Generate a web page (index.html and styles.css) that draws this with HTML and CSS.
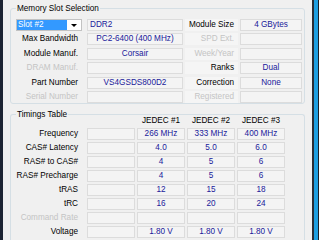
FILE: index.html
```html
<!DOCTYPE html>
<html lang="en">
<head>
  <meta charset="UTF-8">
  <title>SPD</title>
  <link rel="stylesheet" href="styles.css">
</head>
<body>

  <div class="window">
    <div class="edge-left"></div>

    <div class="tab">

      <div class="group slots">
        <div class="group-title">Memory Slot Selection</div>
        <div class="slot-grid">
          <div class="slot-select"><span class="slot-current">Slot #2</span><span class="slot-arrow"></span></div>
          <div class="field left">DDR2</div>
          <div class="label right">Module Size</div>
          <div class="field">4 GBytes</div>

          <div class="label">Max Bandwidth</div>
          <div class="field">PC2-6400 (400 MHz)</div>
          <div class="label right off">SPD Ext.</div>
          <div class="field"></div>

          <div class="label">Module Manuf.</div>
          <div class="field">Corsair</div>
          <div class="label right off">Week/Year</div>
          <div class="field"></div>

          <div class="label off">DRAM Manuf.</div>
          <div class="field"></div>
          <div class="label right">Ranks</div>
          <div class="field">Dual</div>

          <div class="label">Part Number</div>
          <div class="field">VS4GSDS800D2</div>
          <div class="label right">Correction</div>
          <div class="field">None</div>

          <div class="label off">Serial Number</div>
          <div class="field"></div>
          <div class="label right off">Registered</div>
          <div class="field"></div>
        </div>
      </div>

      <div class="group timings">
        <div class="group-title">Timings Table</div>
        <div class="timing-grid">
          <div></div><div></div>
          <div class="head">JEDEC #1</div><div class="head">JEDEC #2</div><div class="head">JEDEC #3</div>

          <div class="label">Frequency</div><div class="field"></div>
          <div class="field">266 MHz</div><div class="field">333 MHz</div><div class="field">400 MHz</div>

          <div class="label">CAS# Latency</div><div class="field"></div>
          <div class="field">4.0</div><div class="field">5.0</div><div class="field">6.0</div>

          <div class="label">RAS# to CAS#</div><div class="field"></div>
          <div class="field">4</div><div class="field">5</div><div class="field">6</div>

          <div class="label">RAS# Precharge</div><div class="field"></div>
          <div class="field">4</div><div class="field">5</div><div class="field">6</div>

          <div class="label">tRAS</div><div class="field"></div>
          <div class="field">12</div><div class="field">15</div><div class="field">18</div>

          <div class="label">tRC</div><div class="field"></div>
          <div class="field">16</div><div class="field">20</div><div class="field">24</div>

          <div class="label off">Command Rate</div><div class="field"></div>
          <div class="field"></div><div class="field"></div><div class="field"></div>

          <div class="label">Voltage</div><div class="field"></div>
          <div class="field">1.80 V</div><div class="field">1.80 V</div><div class="field">1.80 V</div>
        </div>
      </div>

    </div>

    <div class="edge-right"></div>
  </div>

</body>
</html>
```

FILE: styles.css
```css
* {
  margin: 0;
  padding: 0;
  box-sizing: border-box;
}

body {
  width: 319px;
  height: 240px;
  overflow: hidden;
  background: #f0f0f0;
  font-family: 'Liberation Sans', Arial, sans-serif;
  font-size: 8.2px;
  color: #000;
}

.window {
  display: flex;
  height: 240px;
  overflow: hidden;
}

.edge-left {
  width: 3px;
  background: #1d2433;
}

.edge-right {
  width: 7px;
  background: linear-gradient(to right, #2a2d35 0 2px, #1d9ee0 2px 6px, #1a1d24 6px);
}

.tab {
  flex: 1;
  padding: 8px 7px 0 7px;
}

.group {
  border: 1px solid #d5dfe5;
  border-radius: 3px;
}

.group-title {
  width: max-content;
  margin: -6px 0 0 5px;
  padding: 0 1px;
  line-height: 11px;
  background: #f0f0f0;
}

/* memory slot block */

.slot-grid {
  display: grid;
  grid-template-columns: 74px 96px 53px 62px;
  grid-auto-rows: 12px;
  column-gap: 2px;
  row-gap: 2.4px;
  margin-top: 5px;
}

.label {
  text-align: right;
  padding-right: 7px;
  line-height: 12px;
  white-space: nowrap;
}

.label.right {
  padding-right: 4px;
  background: #f5f5f5;
}

.label.off {
  color: #c4c4c4;
}

.field {
  border: 1px solid #dcdcdc;
  background: #f4f4f4;
  color: #20209a;
  text-align: center;
  line-height: 10px;
  white-space: nowrap;
}

.field.left {
  text-align: left;
  padding-left: 2px;
}

.slot-select {
  display: flex;
  width: 66px;
  margin-left: 5px;
  border: 1px solid #c2c2c2;
  background: #fff;
}

.slot-current {
  width: 50px;
  background: #3399ff;
  color: #fff;
  padding-left: 1px;
  line-height: 10px;
}

.slot-arrow {
  flex: 1;
  display: flex;
  align-items: center;
  justify-content: center;
}

.slot-arrow::after {
  content: '';
  border-left: 3px solid transparent;
  border-right: 3px solid transparent;
  border-top: 3px solid #000;
}

/* timings block, its bottom edge is cut off by the window */

.timings {
  margin-top: 10px;
  height: 126px;
  border-bottom: none;
  border-radius: 3px 3px 0 0;
}

.timing-grid {
  display: grid;
  grid-template-columns: 74px repeat(4, 48px);
  grid-template-rows: 10px;
  grid-auto-rows: 12px;
  column-gap: 2px;
  row-gap: 2px;
  margin-top: -4px;
}

.head {
  text-align: center;
  line-height: 10px;
}
```
